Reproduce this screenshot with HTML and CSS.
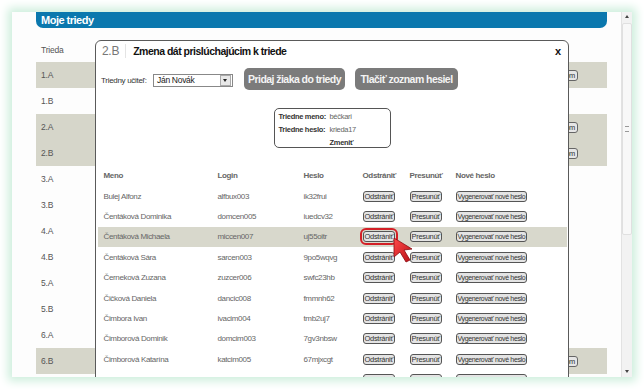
FILE: index.html
```html
<!DOCTYPE html>
<html>
<head>
    <meta charset="utf-8" />
    <title>Moje triedy</title>
    <link rel="stylesheet" href="styles.css">
</head>
<body>
    <div class="screen">
        <div class="page">
            <div class="title-bar">Moje triedy</div>
            <div class="classes">
                <div class="class-row head">Trieda</div>
                <div class="class-row mine">1.A <button class="class-btn">Heslá žiakom</button></div>
                <div class="class-row">1.B</div>
                <div class="class-row mine">2.A <button class="class-btn">Heslá žiakom</button></div>
                <div class="class-row mine">2.B <button class="class-btn">Heslá žiakom</button></div>
                <div class="class-row">3.A</div>
                <div class="class-row">3.B</div>
                <div class="class-row">4.A</div>
                <div class="class-row">4.B</div>
                <div class="class-row">5.A</div>
                <div class="class-row">5.B</div>
                <div class="class-row">6.A</div>
                <div class="class-row mine">6.B <button class="class-btn">Heslá žiakom</button></div>
            </div>
        </div>
        <div class="scrollbar">
            <span class="arrow up"></span>
            <div class="thumb"><span class="grip"></span></div>
            <span class="arrow down"></span>
        </div>

        <div class="modal">
            <div class="modal-head">
                <span class="modal-class">2.B</span>
                <span class="modal-title">Zmena dát prislúchajúcim k triede</span>
                <span class="modal-close">x</span>
            </div>
            <div class="toolbar">
                <label class="teacher-label">Triedny učiteľ:</label>
                <div class="select">
                    <span class="select-value">Ján Novák</span>
                    <span class="select-arrow"></span>
                </div>
                <button class="big-btn add">Pridaj žiaka do triedy</button>
                <button class="big-btn print">Tlačiť zoznam hesiel</button>
            </div>
            <div class="info-box">
                <div class="info-row"><b>Triedne meno:</b><span>béčkari</span></div>
                <div class="info-row"><b>Triedne heslo:</b><span>krieda17</span></div>
                <div class="info-row"><b></b><span class="change">Zmeniť</span></div>
            </div>
            <div class="students">
                <div class="student head">
                    <span>Meno</span><span>Login</span><span>Heslo</span><span>Odstrániť</span><span>Presunúť</span><span>Nové heslo</span>
                </div>
                <div class="student">
                    <span>Bulej Alfonz</span><span>alfbux003</span><span>ik32frui</span>
                    <span><button class="small-btn">Odstrániť</button></span><span><button class="small-btn">Presunúť</button></span><span><button class="small-btn gen">Vygenerovať nové heslo</button></span>
                </div>
                <div class="student">
                    <span>Čentáková Dominika</span><span>domcen005</span><span>iuedcv32</span>
                    <span><button class="small-btn">Odstrániť</button></span><span><button class="small-btn">Presunúť</button></span><span><button class="small-btn gen">Vygenerovať nové heslo</button></span>
                </div>
                <div class="student selected">
                    <span>Čentáková Michaela</span><span>miccen007</span><span>uj55oitr</span>
                    <span><button class="small-btn marked">Odstrániť</button></span><span><button class="small-btn">Presunúť</button></span><span><button class="small-btn gen">Vygenerovať nové heslo</button></span>
                </div>
                <div class="student">
                    <span>Čentáková Sára</span><span>sarcen003</span><span>9po5wqvg</span>
                    <span><button class="small-btn">Odstrániť</button></span><span><button class="small-btn">Presunúť</button></span><span><button class="small-btn gen">Vygenerovať nové heslo</button></span>
                </div>
                <div class="student">
                    <span>Černeková Zuzana</span><span>zuzcer006</span><span>swfc23hb</span>
                    <span><button class="small-btn">Odstrániť</button></span><span><button class="small-btn">Presunúť</button></span><span><button class="small-btn gen">Vygenerovať nové heslo</button></span>
                </div>
                <div class="student">
                    <span>Čičková Daniela</span><span>dancic008</span><span>fmmnh62</span>
                    <span><button class="small-btn">Odstrániť</button></span><span><button class="small-btn">Presunúť</button></span><span><button class="small-btn gen">Vygenerovať nové heslo</button></span>
                </div>
                <div class="student">
                    <span>Čimbora Ivan</span><span>ivacim004</span><span>tmb2uj7</span>
                    <span><button class="small-btn">Odstrániť</button></span><span><button class="small-btn">Presunúť</button></span><span><button class="small-btn gen">Vygenerovať nové heslo</button></span>
                </div>
                <div class="student">
                    <span>Čimborová Dominik</span><span>domcim003</span><span>7gv3nbsw</span>
                    <span><button class="small-btn">Odstrániť</button></span><span><button class="small-btn">Presunúť</button></span><span><button class="small-btn gen">Vygenerovať nové heslo</button></span>
                </div>
                <div class="student">
                    <span>Čimborová Katarína</span><span>katcim005</span><span>67mjxcgt</span>
                    <span><button class="small-btn">Odstrániť</button></span><span><button class="small-btn">Presunúť</button></span><span><button class="small-btn gen">Vygenerovať nové heslo</button></span>
                </div>
                <div class="student last">
                    <span></span><span></span><span></span>
                    <span><button class="small-btn">Odstrániť</button></span><span><button class="small-btn">Presunúť</button></span><span><button class="small-btn gen">Vygenerovať nové heslo</button></span>
                </div>
            </div>
        </div>

        <svg class="cursor" width="24" height="26" viewBox="0 0 24 26">
            <defs>
                <linearGradient id="red" x1="0" y1="0" x2="1" y2="1">
                    <stop offset="0" stop-color="#ff4a4a"/>
                    <stop offset="1" stop-color="#b80f16"/>
                </linearGradient>
            </defs>
            <polygon points="3,1 21,12 13,13 19,23 15,25 9,15 3,20" fill="url(#red)" stroke="#8a0a10" stroke-width="0.8"/>
        </svg>
    </div>
</body>
</html>
```

FILE: styles.css
```css
body {
    margin: 0;
    width: 644px;
    height: 389px;
    overflow: hidden;
    background-color: white;
    font-family: "Liberation Sans", Arial, sans-serif;
}

.screen {
    position: relative;
    display: flex;
    width: 620px;
    height: 365px;
    margin: 12px 0 0 12px;
    background-color: #fdfdfd;
    box-shadow: 0 0 9px 4px #cdeedc;
    overflow: hidden;
}

.page {
    flex: 1;
    padding: 0 14px 0 24px;
}

.title-bar {
    height: 16px;
    line-height: 16px;
    padding-left: 5px;
    background-color: #0b78ae;
    color: white;
    font-size: 11px;
    font-weight: bold;
    letter-spacing: -0.5px;
    border-radius: 0 0 7px 7px;
}

.classes {
    margin-top: 8px;
}

.class-row {
    display: flex;
    align-items: center;
    justify-content: space-between;
    height: 26px;
    padding: 0 29px 0 5px;
    font-size: 8.5px;
    letter-spacing: -0.2px;
    color: #555;
}

    .class-row.head {
        height: 25px;
        padding-top: 1px;
    }

    .class-row.mine {
        background-color: #d6d6ca;
    }

.class-btn {
    height: 11px;
    padding: 0 2px;
    font-family: inherit;
    font-size: 7.5px;
    line-height: 9px;
    letter-spacing: -0.3px;
    color: #333;
    background-color: #e6e6e6;
    border: 1px solid #666;
    border-radius: 3px;
}

.scrollbar {
    display: flex;
    flex-direction: column;
    align-items: center;
    width: 10px;
    background-color: #f2f2f2;
    border-left: 1px solid #e2e2e2;
}

.arrow {
    width: 0;
    height: 0;
    margin: 3px 0;
    border-left: 2px solid transparent;
    border-right: 2px solid transparent;
}

    .arrow.up {
        border-bottom: 3px solid #444;
    }

    .arrow.down {
        margin-top: auto;
        margin-bottom: 4px;
        border-top: 3px solid #444;
    }

.thumb {
    display: flex;
    align-items: center;
    justify-content: center;
    width: 8px;
    height: 210px;
    margin-top: 2px;
    background-color: #f8f8f8;
    border: 1px solid #e0e0e0;
    border-radius: 2px;
}

.grip {
    width: 4px;
    height: 4px;
    border-top: 1px solid #999;
    border-bottom: 1px solid #999;
}

/* dialog */
.modal {
    position: absolute;
    left: 83px;
    top: 28px;
    width: 472px;
    height: 345px;
    background-color: white;
    border: 1.5px solid #5a5a5a;
    border-radius: 6px 6px 0 0;
}

.modal-head {
    display: flex;
    align-items: center;
    height: 16px;
    margin-top: 2px;
}

.modal-class {
    padding: 0 6px;
    font-size: 12px;
    letter-spacing: -0.3px;
    color: #777;
    border-right: 1px solid #e4e4e4;
}

.modal-title {
    flex: 1;
    padding-left: 7px;
    font-size: 10.5px;
    font-weight: bold;
    letter-spacing: -0.5px;
    color: #111;
}

.modal-close {
    padding-right: 7px;
    font-size: 11px;
    font-weight: bold;
    color: #111;
}

.toolbar {
    display: flex;
    align-items: center;
    height: 23px;
    margin-top: 8px;
    padding-left: 5px;
}

.teacher-label {
    width: 48px;
    margin-top: 3px;
    font-size: 8px;
    letter-spacing: -0.3px;
    color: #333;
    white-space: nowrap;
}

.select {
    display: flex;
    align-items: center;
    width: 78px;
    height: 11px;
    margin: 3px 0 0 4px;
    border: 1px solid #888;
    font-size: 8.5px;
    letter-spacing: -0.3px;
    color: #222;
}

.select-value {
    flex: 1;
    padding-left: 3px;
}

.select-arrow {
    position: relative;
    width: 9px;
    height: 9px;
    margin-right: 1px;
    background-color: #e8e8e8;
    border: 1px solid #aaa;
}

    .select-arrow::after {
        content: "";
        position: absolute;
        left: 2px;
        top: 3px;
        border-left: 2.5px solid transparent;
        border-right: 2.5px solid transparent;
        border-top: 3px solid #222;
    }

.big-btn {
    height: 22px;
    padding: 0;
    margin-left: 10px;
    font-family: inherit;
    font-size: 10.5px;
    font-weight: bold;
    letter-spacing: -0.55px;
    color: #f4f4f4;
    background-color: #7b7b7b;
    border: none;
    border-radius: 5px;
    white-space: nowrap;
}

    .big-btn.add {
        width: 101px;
        margin-left: 11px;
    }

    .big-btn.print {
        width: 103px;
    }

.info-box {
    width: 108px;
    height: 36px;
    margin: 18px auto 0;
    padding: 1px 3px 1px 4px;
    border: 1px solid #555;
    border-radius: 5px;
    font-size: 7.5px;
    letter-spacing: -0.3px;
    color: #666;
}

.info-row {
    display: flex;
    height: 13px;
    align-items: center;
    white-space: nowrap;
}

    .info-row b {
        width: 51px;
        color: #333;
    }

.change {
    font-weight: bold;
    color: #333;
}

.students {
    margin: 17px 1px 0 1.5px;
}

.student {
    display: grid;
    grid-template-columns: 114px 86px 59px 47px 46px 1fr;
    align-items: center;
    height: 20.4px;
    font-size: 8px;
    letter-spacing: -0.35px;
    color: #666;
}

    .student span {
        padding-left: 6px;
        white-space: nowrap;
    }

    .student.head {
        height: 21px;
        font-weight: bold;
        color: #666;
    }

    .student.selected {
        background-color: #d8d8cc;
    }

.small-btn {
    height: 11px;
    padding: 0 1px;
    font-family: inherit;
    font-size: 7.5px;
    line-height: 9px;
    letter-spacing: -0.3px;
    color: #333;
    background-color: #e4e4e4;
    border: 1px solid #555;
    border-radius: 3px;
}

    .small-btn.gen {
        font-size: 7px;
        letter-spacing: -0.35px;
    }

    .small-btn.marked {
        outline: 2px solid #d32027;
        outline-offset: 1px;
    }

.cursor {
    position: absolute;
    left: 379px;
    top: 225px;
}
```
